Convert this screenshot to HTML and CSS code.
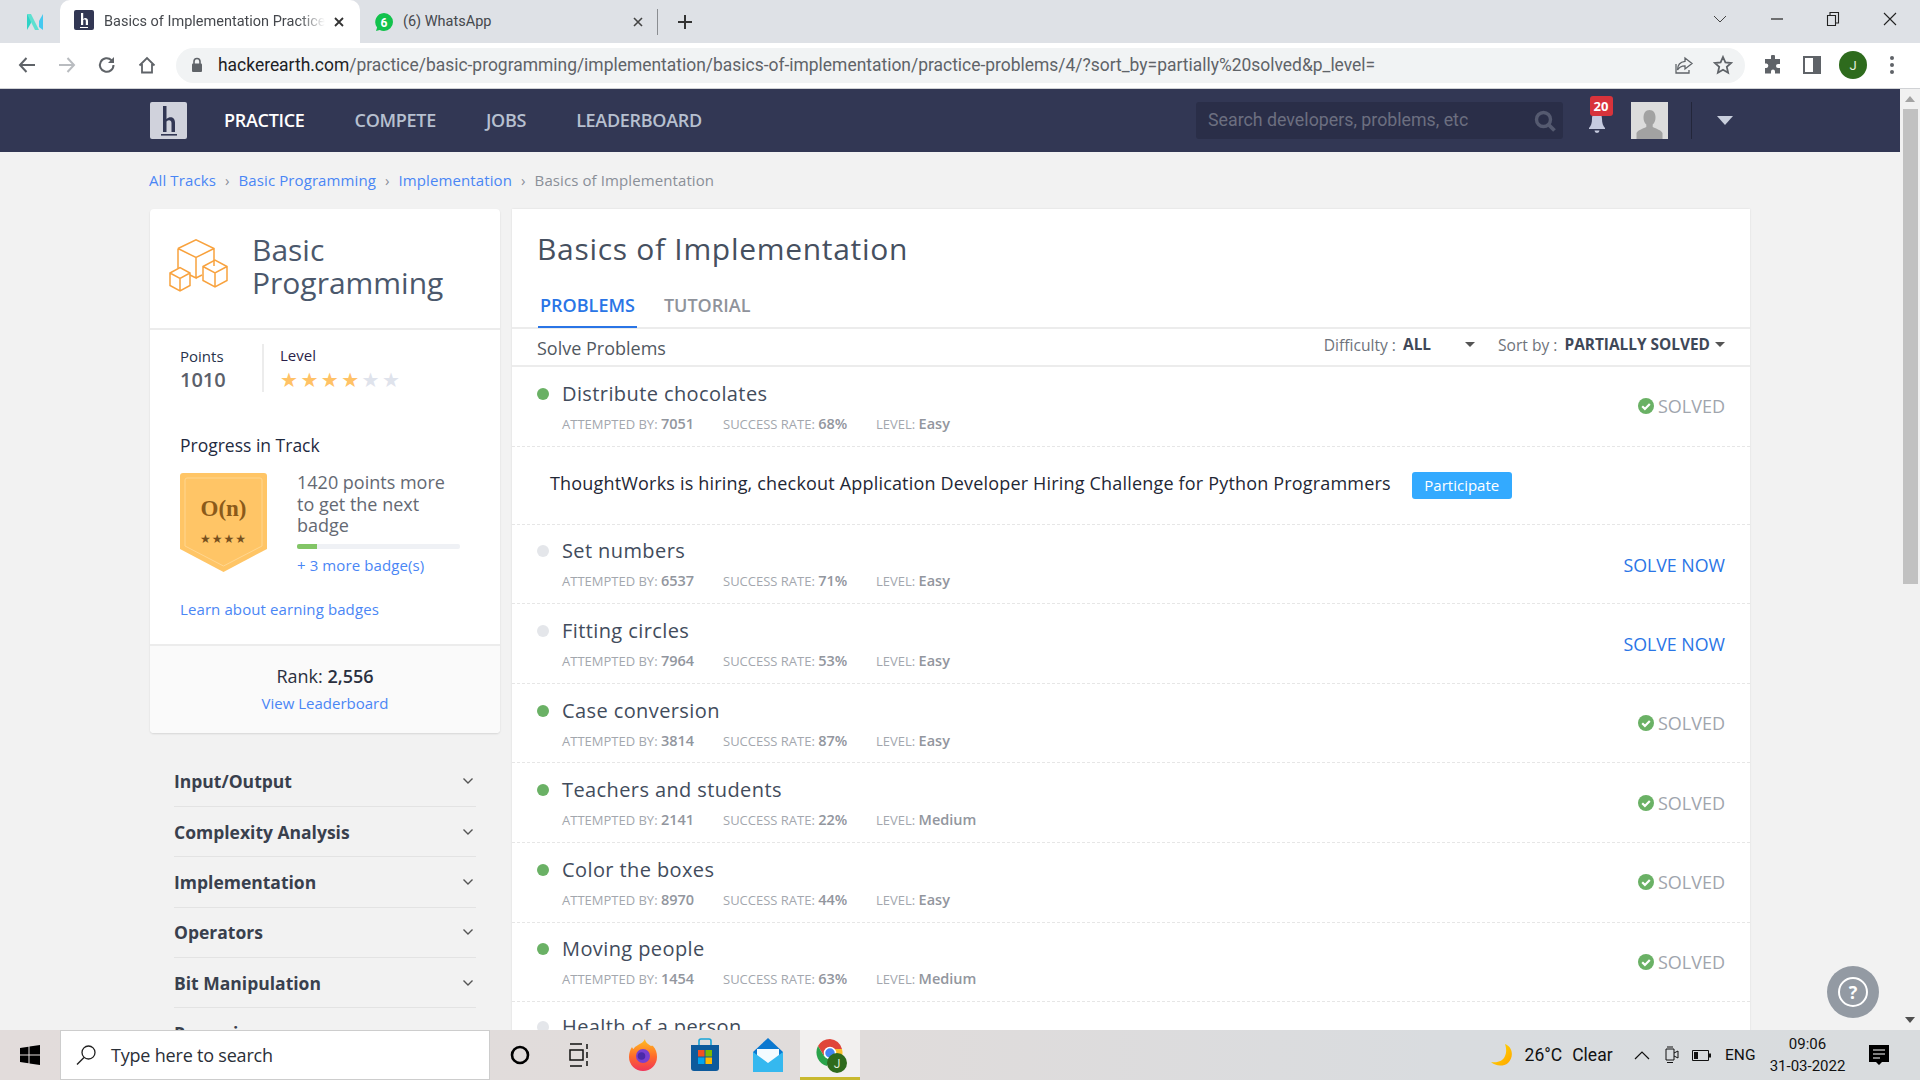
FILE: index.html
```html
<!DOCTYPE html>
<html lang="en">
<head>
<meta charset="utf-8">
<title>Basics of Implementation Practice</title>
<link rel="stylesheet" href="styles.css">
</head>
<body>
<header class="chrome">
  <div class="tabstrip">
    <div class="pinned">
      <svg width="20" height="20" viewBox="0 0 20 20"><path d="M2 18V2l4 3v6z" fill="#2ed3c6"/><path d="M2 2h4l8 16h-4z" fill="#5de0d0"/><path d="M18 2v16l-4-3V9z" fill="#45c9f0"/></svg>
    </div>
    <div class="tab active">
      <span class="favicon-h"><svg width="20" height="20" viewBox="0 0 20 20"><rect width="20" height="20" rx="2" fill="#323754"/><path d="M7 3h2.200v6c1.800-1.600 4.800-1.200 4.800 2v4h-2.200v-4c0-1.600-1.600-1.800-2.600-1V15H7zM6 17h8v1H6z" fill="#fff"/></svg></span>
      <span class="tab-title">Basics of Implementation Practice</span>
      <svg class="tab-x" width="12" height="12" viewBox="0 0 12 12"><path d="M2 2l8 8M10 2l-8 8" stroke="#333" stroke-width="1.8"/></svg>
    </div>
    <div class="tab">
      <svg width="20" height="20" viewBox="0 0 20 20"><path d="M10 1a9 9 0 0 1 0 18c-1.600 0-3-.4-4.300-1.100L2 19l1.100-3.600A9 9 0 0 1 10 1z" fill="#12c24c"/><text x="10" y="14.500" class="wa-count">6</text></svg>
      <span class="tab-title plain">(6) WhatsApp</span>
      <svg class="tab-x" width="12" height="12" viewBox="0 0 12 12"><path d="M2 2l8 8M10 2l-8 8" stroke="#444" stroke-width="1.6"/></svg>
    </div>
    <span class="tab-sep"></span>
    <svg class="tab-plus" width="18" height="18" viewBox="0 0 18 18"><path d="M9 2v14M2 9h14" stroke="#333" stroke-width="2"/></svg>
    <div class="winctl">
      <svg width="16" height="10" viewBox="0 0 16 10"><path d="M2 2l6 6 6-6" fill="none" stroke="#444" stroke-width="1"/></svg>
      <svg width="14" height="14" viewBox="0 0 14 14"><path d="M1 7h12" stroke="#222" stroke-width="1.200"/></svg>
      <svg width="14" height="16" viewBox="0 0 14 16"><path d="M1.500 4.500h8v10h-8zM4 4V1.500h8.500V12H10" fill="none" stroke="#222" stroke-width="1.100"/></svg>
      <svg width="16" height="16" viewBox="0 0 16 16"><path d="M2 2l12 12M14 2L2 14" stroke="#222" stroke-width="1.100"/></svg>
    </div>
  </div>
  <div class="toolbar">
    <svg class="tb" width="20" height="20" viewBox="0 0 20 20"><path d="M18 10H3M9.500 3L3 10l6.500 7" fill="none" stroke="#5f6368" stroke-width="2"/></svg>
    <svg class="tb" width="20" height="20" viewBox="0 0 20 20"><path d="M2 10h15M10.500 3L17 10l-6.500 7" fill="none" stroke="#b9bcc0" stroke-width="2"/></svg>
    <svg class="tb" width="20" height="20" viewBox="0 0 20 20"><path d="M16.500 10a6.800 6.800 0 1 1-2-4.800" fill="none" stroke="#5f6368" stroke-width="2"/><path d="M17 2v6h-6z" fill="#5f6368"/></svg>
    <svg class="tb" width="20" height="20" viewBox="0 0 20 20"><path d="M2.500 10.500L10 3l7.500 7.500M5 9v8.500h10V9" fill="none" stroke="#5f6368" stroke-width="1.800"/></svg>
    <div class="omnibox">
      <svg width="12" height="16" viewBox="0 0 12 16"><path d="M3 7V4.500a3 3 0 0 1 6 0V7" fill="none" stroke="#5f6368" stroke-width="1.600"/><rect x="1" y="6.500" width="10" height="8.500" rx="1" fill="#5f6368"/></svg>
      <span class="url"><b>hackerearth.com</b>/practice/basic-programming/implementation/basics-of-implementation/practice-problems/4/?sort_by=partially%20solved&amp;p_level=</span>
      <svg class="omni-share" width="20" height="20" viewBox="0 0 20 20"><path d="M11 3l7 5.500-7 5.500v-3.200C7 10.800 4.800 12.500 3.500 15 3.500 10 6.500 6.800 11 6.300zM2 9v9h13v-3" fill="none" stroke="#5f6368" stroke-width="1.300"/></svg>
      <svg width="20" height="20" viewBox="0 0 20 20"><path d="M10 2l2.400 5.400 5.800.6-4.400 3.900 1.300 5.800L10 14.700l-5.100 3 1.300-5.800L1.800 8l5.800-.6z" fill="none" stroke="#5f6368" stroke-width="1.800"/></svg>
    </div>
    <svg class="tb-ext" width="20" height="20" viewBox="0 0 20 20"><path d="M8 1.500a2 2 0 0 1 4 0V4h5v5h-2a2 2 0 0 0 0 4h2v5.500H12v-2a2 2 0 0 0-4 0v2H2V13h1.500a2.300 2.300 0 0 0 0-4.500H2V4h6z" fill="#5f6368"/></svg>
    <svg class="tb-side" width="18" height="18" viewBox="0 0 18 18"><path d="M1 1h16v16H1z" fill="none" stroke="#5f6368" stroke-width="2"/><rect x="10" y="1" width="7" height="16" fill="#5f6368"/></svg>
    <span class="profile">J</span>
    <svg class="tb-more" width="6" height="20" viewBox="0 0 6 20"><circle cx="3" cy="3" r="2" fill="#5f6368"/><circle cx="3" cy="10" r="2" fill="#5f6368"/><circle cx="3" cy="17" r="2" fill="#5f6368"/></svg>
  </div>
</header>

<div class="viewport">
  <div class="site">
    <nav class="nav">
      <span class="logo"><svg width="37" height="37" viewBox="0 0 37 37"><rect width="37" height="37" rx="2" fill="#d0d2dc"/><path d="M13 4h3.500v13c3-3 8.500-2.500 8.500 3.500V30h-3.500V21c0-3-3-3.500-5-1.500V30H13z" fill="#323754"/><rect x="11" y="32" width="16" height="1.600" fill="#323754"/></svg></span>
      <a class="nav-link on">PRACTICE</a>
      <a class="nav-link">COMPETE</a>
      <a class="nav-link">JOBS</a>
      <a class="nav-link">LEADERBOARD</a>
      <div class="search">
        <span class="search-ph">Search developers, problems, etc</span>
        <svg width="24" height="24" viewBox="0 0 24 24"><circle cx="10.500" cy="10.500" r="7" fill="none" stroke="#555a70" stroke-width="3.400"/><path d="M15.500 15.500l6 6" stroke="#555a70" stroke-width="3.800"/></svg>
      </div>
      <div class="bell">
        <svg width="18" height="22" viewBox="0 0 18 22"><path d="M9 1c4 0 5 3 5 6 0 4 1 7 3 9v1H1v-1c2-2 3-5 3-9 0-3 1-6 5-6z" fill="#c6cbe0"/><path d="M6.500 18.500h5a2.500 2.500 0 0 1-5 0z" fill="#c6cbe0"/></svg>
        <span class="bell-count">20</span>
      </div>
      <span class="avatar"><svg width="37" height="37" viewBox="0 0 37 37"><rect width="37" height="37" fill="#dcdcdc"/><path d="M18.500 8c4 0 6 3 6 7.500 0 3-1 5.500-2.800 7v2.500c4 2 8.300 3 9.800 6v6.500h-26V31c1.500-3 5.800-4 9.800-6v-2.500c-1.800-1.500-2.800-4-2.800-7C12.500 11 14.500 8 18.500 8z" fill="#a2a2a2"/></svg></span>
      <span class="nav-sep"></span>
      <span class="nav-caret"></span>
    </nav>
    <main class="body">
      <div class="crumbs">
        <a>All Tracks</a><i>›</i><a>Basic Programming</a><i>›</i><a>Implementation</a><i>›</i><span>Basics of Implementation</span>
      </div>
      <div class="columns">
        <aside class="side">
          <section class="track">
            <div class="track-head">
              <svg width="60" height="54" viewBox="0 0 60 54" fill="none" stroke="#f8a23e" stroke-width="1.500"><path d="M9 9.500L27 0.800 45 9.500V27M9 9.500V29M9 9.500l18 9 18-9M27 18.500V39l-6-3M27 39l6-3"/><path d="M34 27.500L46 21l12 6.500v14L46 48l-12-6.500zM34 27.500l12 6.500 12-6.500M46 34v14"/><path d="M1 34l10-5.500L21 34v12.500L11 52 1 46.500zM1 34l10 5.500L21 34M11 39.500V52"/></svg>
              <h2>Basic Programming</h2>
            </div>
            <div class="track-stats">
              <div class="points"><span>Points</span><strong>1010</strong></div>
              <div class="level"><span>Level</span>
                <div class="stars"><i>★</i><i>★</i><i>★</i><i>★</i><i class="off">★</i><i class="off">★</i></div>
              </div>
            </div>
            <div class="progress">
              <h3>Progress in Track</h3>
              <div class="progress-row">
                <div class="badge">
                  <svg width="87" height="99" viewBox="0 0 87 99"><path d="M3 0h81a3 3 0 0 1 3 3v73L43.500 99 0 76V3a3 3 0 0 1 3-3z" fill="#ffc566"/><path d="M7 5h73a2 2 0 0 1 2 2v66L43.500 93 5 73V7a2 2 0 0 1 2-2z" fill="none" stroke="#ffd68f" stroke-width="1"/></svg>
                  <span class="badge-o">O(n)</span>
                  <span class="badge-stars">★★★★</span>
                </div>
                <div class="progress-info">
                  <p>1420 points more to get the next badge</p>
                  <div class="bar"><div class="bar-fill"></div></div>
                  <a class="more">+ 3 more badge(s)</a>
                </div>
              </div>
              <a class="learn">Learn about earning badges</a>
            </div>
            <div class="rank">
              <div class="rank-line">Rank: <b>2,556</b></div>
              <a>View Leaderboard</a>
            </div>
          </section>
          <ul class="topics">
            <li>Input/Output<svg width="12" height="8" viewBox="0 0 12 8"><path d="M1.500 1.500L6 6l4.500-4.500" fill="none" stroke="#555" stroke-width="1.400"/></svg></li>
            <li>Complexity Analysis<svg width="12" height="8" viewBox="0 0 12 8"><path d="M1.500 1.500L6 6l4.500-4.500" fill="none" stroke="#555" stroke-width="1.400"/></svg></li>
            <li>Implementation<svg width="12" height="8" viewBox="0 0 12 8"><path d="M1.500 1.500L6 6l4.500-4.500" fill="none" stroke="#555" stroke-width="1.400"/></svg></li>
            <li>Operators<svg width="12" height="8" viewBox="0 0 12 8"><path d="M1.500 1.500L6 6l4.500-4.500" fill="none" stroke="#555" stroke-width="1.400"/></svg></li>
            <li>Bit Manipulation<svg width="12" height="8" viewBox="0 0 12 8"><path d="M1.500 1.500L6 6l4.500-4.500" fill="none" stroke="#555" stroke-width="1.400"/></svg></li>
            <li>Recursion<svg width="12" height="8" viewBox="0 0 12 8"><path d="M1.500 1.500L6 6l4.500-4.500" fill="none" stroke="#555" stroke-width="1.400"/></svg></li>
          </ul>
        </aside>
        <section class="panel">
          <h1>Basics of Implementation</h1>
          <div class="tabs"><a class="ptab on">PROBLEMS</a><a class="ptab">TUTORIAL</a></div>
          <div class="filters">
            <span class="solve">Solve Problems</span>
            <span class="filter diff">Difficulty : <b>ALL</b><i class="caret wide"></i></span>
            <span class="filter">Sort by : <b>PARTIALLY SOLVED</b><i class="caret"></i></span>
          </div>
          <article class="row">
            <div><h4 class="done">Distribute chocolates</h4><p class="meta"><span class="m1">ATTEMPTED BY: <b>7051</b></span><span class="m2">SUCCESS RATE: <b>68%</b></span><span>LEVEL: <b>Easy</b></span></p></div>
            <span class="solved"><svg width="16" height="16" viewBox="0 0 16 16"><circle cx="8" cy="8" r="8" fill="#6ab165"/><path d="M4.200 8.200l2.700 2.700 4.900-5" fill="none" stroke="#fff" stroke-width="2.200"/></svg>SOLVED</span>
          </article>
          <article class="ad"><span>ThoughtWorks is hiring, checkout Application Developer Hiring Challenge for Python Programmers</span><a class="participate">Participate</a></article>
          <article class="row">
            <div><h4>Set numbers</h4><p class="meta"><span class="m1">ATTEMPTED BY: <b>6537</b></span><span class="m2">SUCCESS RATE: <b>71%</b></span><span>LEVEL: <b>Easy</b></span></p></div>
            <a class="solve-now">SOLVE NOW</a>
          </article>
          <article class="row">
            <div><h4>Fitting circles</h4><p class="meta"><span class="m1">ATTEMPTED BY: <b>7964</b></span><span class="m2">SUCCESS RATE: <b>53%</b></span><span>LEVEL: <b>Easy</b></span></p></div>
            <a class="solve-now">SOLVE NOW</a>
          </article>
          <article class="row">
            <div><h4 class="done">Case conversion</h4><p class="meta"><span class="m1">ATTEMPTED BY: <b>3814</b></span><span class="m2">SUCCESS RATE: <b>87%</b></span><span>LEVEL: <b>Easy</b></span></p></div>
            <span class="solved"><svg width="16" height="16" viewBox="0 0 16 16"><circle cx="8" cy="8" r="8" fill="#6ab165"/><path d="M4.200 8.200l2.700 2.700 4.900-5" fill="none" stroke="#fff" stroke-width="2.200"/></svg>SOLVED</span>
          </article>
          <article class="row">
            <div><h4 class="done">Teachers and students</h4><p class="meta"><span class="m1">ATTEMPTED BY: <b>2141</b></span><span class="m2">SUCCESS RATE: <b>22%</b></span><span>LEVEL: <b>Medium</b></span></p></div>
            <span class="solved"><svg width="16" height="16" viewBox="0 0 16 16"><circle cx="8" cy="8" r="8" fill="#6ab165"/><path d="M4.200 8.200l2.700 2.700 4.900-5" fill="none" stroke="#fff" stroke-width="2.200"/></svg>SOLVED</span>
          </article>
          <article class="row">
            <div><h4 class="done">Color the boxes</h4><p class="meta"><span class="m1">ATTEMPTED BY: <b>8970</b></span><span class="m2">SUCCESS RATE: <b>44%</b></span><span>LEVEL: <b>Easy</b></span></p></div>
            <span class="solved"><svg width="16" height="16" viewBox="0 0 16 16"><circle cx="8" cy="8" r="8" fill="#6ab165"/><path d="M4.200 8.200l2.700 2.700 4.900-5" fill="none" stroke="#fff" stroke-width="2.200"/></svg>SOLVED</span>
          </article>
          <article class="row">
            <div><h4 class="done">Moving people</h4><p class="meta"><span class="m1">ATTEMPTED BY: <b>1454</b></span><span class="m2">SUCCESS RATE: <b>63%</b></span><span>LEVEL: <b>Medium</b></span></p></div>
            <span class="solved"><svg width="16" height="16" viewBox="0 0 16 16"><circle cx="8" cy="8" r="8" fill="#6ab165"/><path d="M4.200 8.200l2.700 2.700 4.900-5" fill="none" stroke="#fff" stroke-width="2.200"/></svg>SOLVED</span>
          </article>
          <article class="row cut">
            <div><h4>Health of a person</h4></div>
          </article>
        </section>
      </div>
    </main>
    <div class="help"><span>?</span></div>
  </div>
  <div class="scrollbar"><i class="arrow up"></i><div class="thumb"></div><i class="arrow down"></i></div>
</div>

<footer class="taskbar">
  <svg class="win" width="20" height="20" viewBox="0 0 20 20"><path d="M0 3l8.500-1.200V9.500H0zM9.500 1.600L20 0v9.500H9.500zM0 10.500h8.500v7.700L0 17zM9.500 10.500H20V20L9.500 18.400z" fill="#000"/></svg>
  <div class="tsearch">
    <svg width="22" height="22" viewBox="0 0 22 22"><circle cx="13.500" cy="8.500" r="6.500" fill="none" stroke="#222" stroke-width="1.300"/><path d="M9 13.500L2 20.500" stroke="#222" stroke-width="1.500"/></svg>
    <span>Type here to search</span>
  </div>
  <div class="apps">
    <span class="app"><svg width="20" height="20" viewBox="0 0 20 20"><circle cx="10" cy="10" r="8" fill="none" stroke="#000" stroke-width="2.600"/></svg></span>
    <span class="app"><svg width="22" height="24" viewBox="0 0 22 24"><path d="M1 1h12M1 23h12M1 7h13v10H1zM18 1v5M18 9v6M18 18v5" fill="none" stroke="#111" stroke-width="1.500"/></svg></span>
    <span class="app"><svg width="30" height="32" viewBox="0 0 30 32"><defs><linearGradient id="ff" x1="0" y1="0" x2="0" y2="1"><stop offset="0" stop-color="#ffc020"/><stop offset="0.550" stop-color="#ff6a2a"/><stop offset="1" stop-color="#f0345a"/></linearGradient></defs><path d="M17 0c0 3 3 5 6 7 1-.5 1.500-.5 2 0 3 3 4 7 4 11a14 14 0 0 1-28 0c0-4 1-7 3-10 .5 1 .8 1.500 1.500 2 1.500-3 5-4 8-6 1.500-1 2.800-2.500 3.500-4z" fill="url(#ff)"/><circle cx="15" cy="17" r="7" fill="#7a3fd0"/><circle cx="13.500" cy="17" r="3.800" fill="#4a2aa8"/></svg></span>
    <span class="app"><svg width="30" height="34" viewBox="0 0 30 34"><path d="M9 7V3a2 2 0 0 1 2-2h8a2 2 0 0 1 2 2v4" fill="none" stroke="#18a4d8" stroke-width="1.600"/><path d="M1 7h28v23a3 3 0 0 1-3 3H4a3 3 0 0 1-3-3z" fill="#0d5a9c"/><rect x="8" y="12" width="6.500" height="6.500" fill="#f25022"/><rect x="15.500" y="12" width="6.500" height="6.500" fill="#7fba00"/><rect x="8" y="19.500" width="6.500" height="6.500" fill="#00a4ef"/><rect x="15.500" y="19.500" width="6.500" height="6.500" fill="#ffb900"/></svg></span>
    <span class="app"><svg width="30" height="34" viewBox="0 0 30 34"><path d="M0 14L15 0l15 14v20H0z" fill="#0b78d0"/><path d="M4 11h22v12l-11 7-11-7z" fill="#f4fbff"/><path d="M0 14l15 11 15-11v20H0z" fill="#35b8ef"/></svg></span>
    <span class="app app-on"><svg class="chrome-logo" width="34" height="36" viewBox="0 0 34 36"><path d="M15 1A14 14 0 0 0 3 8l6 10a7 7 0 0 1 6-7h12A14 14 0 0 0 15 1z" fill="#e0453a"/><path d="M3 8a14 14 0 0 0 9 20l5-8a7 7 0 0 1-8-2z" fill="#2aa34a"/><path d="M27 11H15a7 7 0 0 1 5 9l-6 9a14 14 0 0 0 13-18z" fill="#fbc02d"/><circle cx="15" cy="15" r="5.500" fill="#4285f4" stroke="#fff" stroke-width="1.500"/><circle cx="22" cy="25" r="10" fill="#2e6b1d"/><text x="22" y="29.500" class="chrome-j">J</text></svg></span>
  </div>
  <div class="tray">
    <svg class="moon" width="22" height="24" viewBox="0 0 22 24"><defs><linearGradient id="mn" x1="0" y1="0" x2="1" y2="1"><stop offset="0" stop-color="#ffe000"/><stop offset="1" stop-color="#ffa400"/></linearGradient></defs><path d="M14 1c8 3 9 13 3 19-5 4-13 3-17-1 7 1 12-1 14-6 2-4 1-9 0-12z" fill="url(#mn)"/></svg>
    <span class="temp">26°C</span>
    <span class="clear">Clear</span>
    <svg class="tray-i t-chev" width="16" height="9" viewBox="0 0 16 9"><path d="M1 8l7-7 7 7" fill="none" stroke="#111" stroke-width="1.200"/></svg>
    <svg class="tray-i t-meet" width="14" height="20" viewBox="0 0 14 20"><path d="M1 4h8v11H1zM9 8l4-2v7l-4-2M2 2h6M2 17.500h6" fill="none" stroke="#111" stroke-width="1"/></svg>
    <svg class="tray-i t-bat" width="19" height="11" viewBox="0 0 19 11"><path d="M.5.500h16v10H.5z" fill="none" stroke="#111"/><rect x="2" y="2" width="4" height="7" fill="#111"/><rect x="17" y="3.500" width="2" height="4" fill="#111"/></svg>
    <span class="eng">ENG</span>
    <div class="clock"><span>09:06</span><span>31-03-2022</span></div>
    <svg class="notif" width="20" height="21" viewBox="0 0 20 21"><path d="M0 0h20v17h-7l-3 3-3-3H0z" fill="#000"/><path d="M4 5h12M4 9h12M4 13h7" stroke="#fff" stroke-width="1"/></svg>
  </div>
</footer>
</body>
</html>
```
FILE: styles.css
```css
* { box-sizing: border-box; margin: 0; padding: 0; }
html, body { width: 1920px; height: 1080px; overflow: hidden; }
body { display: flex; flex-direction: column; font-family: "Open Sans", "Liberation Sans", sans-serif; background: #f2f2f2; color: #3c4658; }
a { color: #4a86f5; text-decoration: none; }
ul { list-style: none; }

/* browser chrome */
.chrome { flex: none; font-family: Roboto, "Liberation Sans", sans-serif; }
.tabstrip { height: 43px; background: #dee1e6; display: flex; align-items: center; }
.pinned { width: 60px; padding-left: 25px; display: flex; }
.tab { height: 43px; width: 300px; display: flex; align-items: center; padding: 0 15px 0 15px; }
.tab.active { background: #fff; border-radius: 10px 10px 0 0; padding-left: 14px; }
.tab + .tab { width: 297px; padding: 0 13px 0 14px; }
.tab-title { margin-left: 10px; font-size: 14.500px; color: #45484d; flex: 1; white-space: nowrap; overflow: hidden; -webkit-mask-image: linear-gradient(90deg, #000 88%, transparent 100%); mask-image: linear-gradient(90deg, #000 88%, transparent 100%); }
.tab-title.plain { margin-left: 9px; -webkit-mask-image: none; mask-image: none; }
.wa-count { font: bold 12px Roboto, sans-serif; fill: #fff; text-anchor: middle; }
.tab-x { margin-left: 8px; flex: none; }
.tab-sep { width: 1px; height: 26px; background: #8a8d91; }
.tab-plus { margin-left: 18px; }
.winctl { margin-left: auto; display: flex; align-items: center; gap: 42px; padding-right: 22px; margin-top: -5px; }

.toolbar { height: 46px; background: #fff; border-bottom: 1px solid #d0d2d5; display: flex; align-items: center; padding: 0 0 1px 17px; }
.tb { margin-right: 20px; flex: none; }
.omnibox { margin-left: -1px; width: 1569px; height: 35px; border-radius: 18px; background: #f1f3f4; display: flex; align-items: center; padding: 0 12px 0 15px; gap: 0; }
.url { margin-left: 15px; font-size: 17.450px; color: #5f6368; white-space: nowrap; flex: 1; }
.url b { font-weight: 400; color: #202124; }
.omni-share { margin-right: 19px; }
.tb-ext { margin-left: 18px; }
.tb-side { margin-left: 20px; }
.profile { margin-left: 18px; width: 28px; height: 28px; border-radius: 50%; background: #2e6b1d; color: #e4efdf; font-size: 13px; display: flex; align-items: center; justify-content: center; }
.tb-more { margin-left: 22px; }

/* viewport */
.viewport { flex: 1; min-height: 0; display: flex; }
.site { width: 1900px; display: flex; flex-direction: column; position: relative; overflow: hidden; }
.scrollbar { width: 20px; background: #f1f1f1; display: flex; flex-direction: column; align-items: center; padding-top: 7px; position: relative; }
.thumb { width: 15px; height: 475px; background: #c1c1c1; margin-top: 7px; }
.arrow { width: 0; height: 0; border-left: 5px solid transparent; border-right: 5px solid transparent; }
.arrow.up { border-bottom: 6px solid #a3a3a3; }
.arrow.down { border-top: 6px solid #505050; margin-top: auto; margin-bottom: 7px; }

.nav { flex: none; height: 63px; background: #323754; display: flex; align-items: center; padding-left: 150px; }
.logo { display: flex; width: 37px; margin-right: 37px; }
.nav-link { font-size: 18px; font-weight: 600; color: #b7c0d0; margin-right: 50px; white-space: nowrap; letter-spacing: -.3px; margin-top: -2px; }
.nav-link.on { color: #fff; }
.search { margin-left: auto; width: 367px; height: 37px; border-radius: 3px; background: #2a2e48; display: flex; align-items: center; justify-content: space-between; padding: 0 6px 0 12px; }
.search-ph { font: 17.800px Roboto, sans-serif; color: #6c6f80; margin-top: -2px; }
.bell { position: relative; margin-left: 25px; display: flex; width: 18px; margin-top: 4px; }
.bell-count { position: absolute; left: 1.500px; top: -16px; width: 23px; height: 20px; border-radius: 3px; background: #d8333b; color: #fff; font-size: 13px; font-weight: 700; text-align: center; line-height: 20px; }
.avatar { display: flex; margin-left: 25px; }
.nav-sep { width: 1px; height: 37px; background: #23263a; margin-left: 23px; }
.nav-caret { width: 0; height: 0; margin: 0 167px 0 25px; border-left: 8px solid transparent; border-right: 8px solid transparent; border-top: 9px solid #c9cfdd; }

.body { flex: 1; min-height: 0; padding: 0 0 0 150px; }
.crumbs { height: 57px; padding-bottom: 2px; margin-left: -1px; display: flex; align-items: center; font-size: 15px; letter-spacing: .1px; color: #8a8f98; }
.crumbs i { font-style: normal; margin: 0 9px; color: #8a8f98; }
.columns { display: flex; gap: 12px; align-items: flex-start; }

/* track card */
.side { width: 350px; flex: none; }
.track { background: #fff; border-radius: 4px; box-shadow: 0 1px 2px rgba(0,0,0,.12); overflow: hidden; }
.track-head { height: 121px; border-bottom: 2px solid #ececec; display: flex; align-items: center; padding-left: 19px; gap: 23px; }
.track-head svg { flex: none; margin-top: -6px; }
.track-head h2 { font-size: 30px; font-weight: 400; line-height: 33px; color: #4b586c; width: 230px; margin-top: -5px; }
.track-stats { display: flex; padding: 14px 0 0 30px; height: 63px; }
.points { width: 84px; border-right: 2px solid #ececec; height: 48px; display: flex; flex-direction: column; font-size: 15px; color: #27324a; line-height: 20px; padding-top: 2px; }
.points strong { font-size: 20px; font-weight: 600; color: #5b606a; line-height: 28px; }
.level { padding-left: 16px; padding-top: 1px; font-size: 15px; line-height: 20px; color: #2b1f4a; }
.stars { display: flex; gap: 0; margin-top: 5px; }
.stars i { font-style: normal; font-size: 20px; color: #ffc266; width: 20.400px; line-height: 20px; font-family: "DejaVu Sans", sans-serif; }
.stars i.off { color: #dfe3ec; }
.progress { padding: 40px 30px 0; }
.progress h3 { font-size: 17.500px; font-weight: 400; line-height: 24px; color: #1f2a3f; }
.progress-row { display: flex; gap: 30px; margin-top: 16px; }
.badge { position: relative; width: 87px; height: 99px; flex: none; display: flex; flex-direction: column; align-items: center; }
.badge svg { position: absolute; left: 0; top: 0; }
.badge-o { position: relative; margin-top: 23px; font: bold 23px "Liberation Serif", serif; color: #8b5a1a; }
.badge-stars { position: relative; font: 12px "DejaVu Sans", sans-serif; color: #76501e; letter-spacing: 1px; margin-top: 10px; }
.progress-info { width: 163px; }
.progress-info p { font-size: 18px; line-height: 21.500px; color: #646973; margin-top: -1px; width: 150px; }
.bar { height: 5px; background: #eff1f5; border-radius: 2px; margin-top: 7px; overflow: hidden; }
.bar-fill { width: 20px; height: 5px; background: #82c566; }
.more { display: block; font-size: 15px; line-height: 20px; margin-top: 6px; letter-spacing: .1px; }
.learn { display: block; font-size: 15px; line-height: 20px; margin-top: 24px; padding-bottom: 25px; letter-spacing: .1px; }
.rank { border-top: 2px solid #ececec; background: #fafafa; height: 89px; text-align: center; padding-top: 17px; }
.rank-line { font-size: 18px; line-height: 26px; color: #2a3040; }
.rank-line b { font-weight: 600; }
.rank a { display: block; font-size: 15px; line-height: 20px; margin-top: 4px; }

.topics { margin: 24px 24px 0 24px; }
.topics li { height: 50.400px; border-bottom: 1px solid #e3e3e3; display: flex; align-items: center; justify-content: space-between; font-size: 17.500px; font-weight: 700; color: #39404d; padding-right: 2px; }

/* problems */
.panel { width: 1238px; flex: none; background: #fff; box-shadow: 0 0 2px rgba(0,0,0,.1); padding-top: 18px; }
.panel h1 { font-size: 30px; font-weight: 500; line-height: 44px; color: #46505f; padding-left: 25px; letter-spacing: .7px; }
.tabs { height: 58px; border-bottom: 2px solid #ececec; display: flex; align-items: flex-end; padding-left: 26px; gap: 25px; }
.ptab { font-size: 18px; font-weight: 600; color: #8f939b; height: 34px; padding: 0 2px; }
.ptab.on { color: #2a75e6; border-bottom: 2px solid #2a75e6; margin-bottom: -1px; height: 35px; }
.filters { height: 38px; border-bottom: 2px solid #ececec; display: flex; align-items: center; padding: 0 25px; }
.solve { font-size: 18px; color: #51585f; flex: 1; margin-top: 1px; }
.filter { font: 15.600px "Open Sans", sans-serif; color: #6e737b; display: flex; align-items: center; white-space: pre; margin-top: -5px; }
.filter b { font-weight: 700; color: #3f4858; margin-left: 3px; font-size: 15.400px; }
.caret { width: 0; height: 0; border-left: 5px solid transparent; border-right: 5px solid transparent; border-top: 5px solid #555; margin-left: 5px; }
.caret.wide { margin: 0 23px 0 34px; }
.row { height: 79.600px; border-bottom: 1px dashed #e6e6e6; display: flex; align-items: center; justify-content: space-between; padding: 1px 25px 0 50px; flex: none; }
.row.cut { align-items: flex-start; padding-top: 11px; }
.row h4 { position: relative; font-size: 20px; font-weight: 500; line-height: 28px; color: #424c5c; letter-spacing: .4px; }
.row h4::before { content: ""; position: absolute; left: -25px; top: 8px; width: 12px; height: 12px; border-radius: 50%; background: #e4e6ea; }
.row h4.done::before { background: #6ab165; }
.meta { font-size: 13px; color: #a3a7ae; margin-top: 6px; display: flex; line-height: 20px; }
.meta b { font-size: 14.500px; font-weight: 600; color: #92969e; }
.m1 { width: 161px; }
.m2 { width: 153px; }
.solved { display: flex; align-items: center; gap: 4px; font-size: 18px; color: #a0a5ad; font-weight: 400; margin-top: -1px; }
.solve-now { font-size: 17.800px; color: #2a75e6; margin-top: 1px; }
.ad { height: 78px; border-bottom: 1px dashed #e6e6e6; display: flex; align-items: center; padding: 0 0 4px 38px; gap: 21px; font-size: 18px; font-weight: 500; color: #1f2735; letter-spacing: .18px; }
.participate { width: 100px; height: 27px; background: #33aaff; border-radius: 3px; color: #fff; font-size: 15px; font-weight: 400; display: flex; align-items: center; justify-content: center; margin-top: 4px; letter-spacing: 0; }

.help { position: absolute; left: 1827px; top: 877px; width: 52px; height: 52px; border-radius: 50%; background: #939aa3; display: flex; align-items: center; justify-content: center; }
.help span { width: 30px; height: 30px; border: 2px solid #fff; border-radius: 50%; color: #fff; font-size: 18px; font-weight: 700; line-height: 26px; text-align: center; }

/* taskbar */
.taskbar { flex: none; height: 50px; position: relative; background: linear-gradient(90deg, #e2dcdb 0%, #e0dcdb 45%, #d9dcdf 75%, #d9dcde 100%); display: flex; align-items: center; padding-left: 20px; font-family: Roboto, sans-serif; z-index: 2; }
.win { flex: none; }
.tsearch { margin-left: 20px; width: 430px; height: 50px; background: #fff; border: 1px solid #cdcdcd; display: flex; align-items: center; padding-left: 14px; gap: 14px; font: 18px "Open Sans", sans-serif; color: #2a2f38; letter-spacing: -.2px; }
.apps { display: flex; margin-left: 0; height: 50px; padding-left: 0; }
.app { width: 60px; display: flex; align-items: center; justify-content: center; margin-left: 2.500px; }
.app:first-child, .app:nth-child(2) { margin-left: 0; }
.app-on { background: #f2f0ef; border-bottom: 3px solid #c9b92f; }
.chrome-logo { margin: 4px 0 0 3px; }
.chrome-j { font: 12px Roboto, sans-serif; fill: #dfe9da; text-anchor: middle; }
.tray { margin-left: auto; display: flex; align-items: center; height: 50px; color: #111; }
.moon { margin-right: 11.500px; }
.temp { font-size: 17.500px; margin-right: 10px; }
.clear { font-size: 17.500px; margin-right: 21px; }
.t-chev { margin-right: 15.200px; }
.t-meet { margin-right: 13.500px; }
.t-bat { margin-right: 13.800px; }
.eng { font-size: 15.500px; margin-right: 12px; }
.clock { display: flex; flex-direction: column; align-items: center; font-size: 15px; line-height: 22px; width: 80px; }
.notif { margin: 0 31px 0 21.500px; }
```
